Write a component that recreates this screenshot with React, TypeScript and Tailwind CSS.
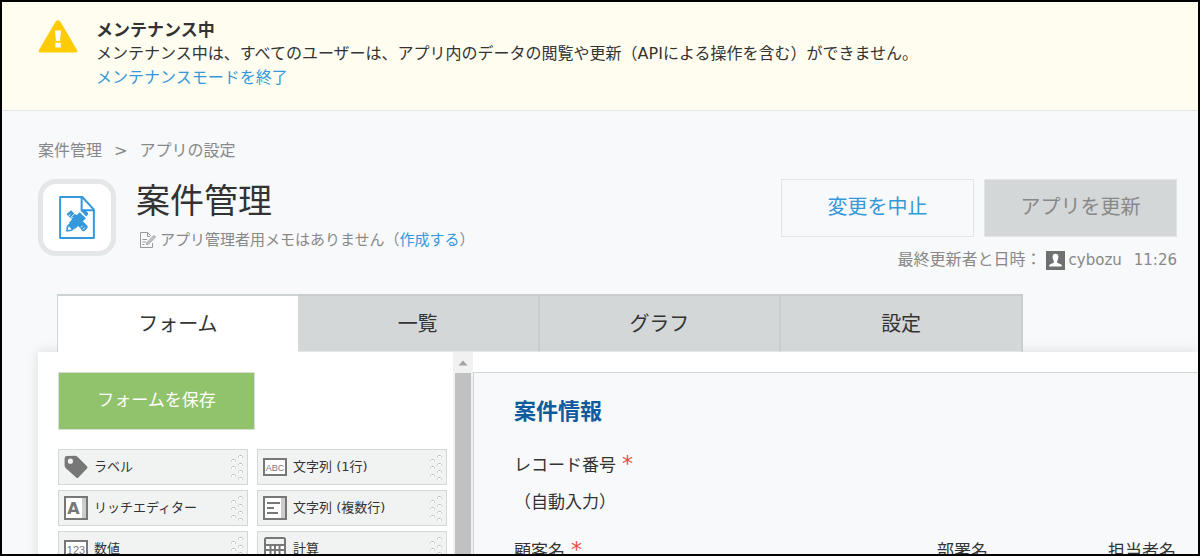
import React from 'react';

type IconName = 'label' | 'rich' | 'number' | 'text' | 'multi' | 'calc';

const fields: { name: string; icon: IconName }[] = [
  { name: 'ラベル', icon: 'label' },
  { name: '文字列 (1行)', icon: 'text' },
  { name: 'リッチエディター', icon: 'rich' },
  { name: '文字列 (複数行)', icon: 'multi' },
  { name: '数値', icon: 'number' },
  { name: '計算', icon: 'calc' },
];

const tabs = ['フォーム', '一覧', 'グラフ', '設定'];

const WarningIcon = () => (
  <svg viewBox="0 0 40 33" className="w-10 h-[33px] shrink-0" aria-hidden="true">
    <path d="M18 1.2Q20 -.8 22 1.2Q23 2.4 39 30Q40 32.4 37.6 32.4H2.4Q0 32.4 1 30Q17 2.4 18 1.2Z" fill="#ffcb05" />
    <path d="M17 10.5H23L22 21H18ZM17.4 22.8H22.8V27.6H17.4Z" fill="#fff" />
  </svg>
);

// Document with a crossed pencil and ruler
const AppIcon = () => (
  <svg viewBox="0 0 108 130" className="w-9 h-[43px]" aria-hidden="true">
    <path d="M3 3H70L105 41V127H3Z" fill="#fff" stroke="#3498db" strokeWidth="6" strokeLinejoin="round" />
    <path d="M68 4V43H104" fill="none" stroke="#3498db" strokeWidth="6" />
    <g fill="#3498db">
      <path d="M21 108L23 91L33 81L49 97L38 106Z" />
      <path d="M30 80L62 49L81 67L49 99Z" />
      <path d="M67 46L74 41Q77 41 80 44L86 50Q88 53 87 56L82 62Z" />
      <path d="M22 55L36 43L46 53L33 66Z" />
      <path d="M34 67L48 54L78 83L64 97Z" />
      <path d="M73 78L86 91Q88 94 84 99L76 106Q72 108 69 104L60 92Z" />
    </g>
    <path d="M26 103L29 91L38 101Z" fill="#fff" />
    <path d="M28 61L34 56M36 69L41 64M66 95L71 90M72 101L78 95" stroke="#fff" strokeWidth="3" />
  </svg>
);

const MemoIcon = () => (
  <svg viewBox="0 0 18 18" className="w-[18px] h-[18px] shrink-0" fill="none" stroke="#999" aria-hidden="true">
    <path d="M13.5 12V16.5H1.5V1.5H8.5L12 5" />
    <path d="M8.5 1.5V5.5H11M3.5 8.5H8M3.5 11H7M3.5 13.5H5.5" />
    <path d="M7.5 13.5L8 11.5L15 4.5L16.5 6L9.5 13Z" fill="#ccc" />
  </svg>
);

const UserIcon = () => (
  <svg viewBox="0 0 20 20" className="w-[19px] h-[19px] shrink-0" aria-hidden="true">
    <path d="M0 0H20V20H0Z" fill="#707070" />
    <path d="M10 3C12.4 3 13.4 4.8 13 7.2C12.8 9 12 9.8 11.8 10.6V12.4L15.6 14Q16.8 14.6 16.8 16.4H3.2Q3.2 14.6 4.4 14L8.2 12.4V10.6C8 9.8 7.2 9 7 7.2C6.6 4.8 7.6 3 10 3Z" fill="#fff" />
  </svg>
);

const iconText = { fill: '#777', textAnchor: 'middle' as const, stroke: 'none' };

const FieldIcon = ({ name }: { name: IconName }) => (
  <svg viewBox="0 0 24 24" className="w-6 h-6 shrink-0" fill="none" stroke="#777" strokeWidth="2" aria-hidden="true">
    {name === 'label' && (
      <path
        fillRule="evenodd"
        d="M3 1L11 .8Q12.4 .8 13.4 1.8L23 11.2Q24 12.4 23 13.4L14.4 22.6Q13.4 23.6 12.2 22.6L1.8 13.2Q.6 12 .6 10.6V3.4Q.6 1 3 1ZM6.4 3.6A2.6 2.6 0 1 0 6.4 8.8A2.6 2.6 0 1 0 6.4 3.6Z"
        fill="#777"
        stroke="none"
      />
    )}
    {name === 'rich' && (
      <>
        <path d="M1 1H23V23H1Z" fill="#fff" />
        <path d="M18 2H22V22H18Z" fill="#ccc" stroke="none" />
        <text x="9.5" y="18" fontSize="16" fontWeight="700" {...iconText}>A</text>
      </>
    )}
    {name === 'text' && (
      <>
        <path d="M1 4H23V20H1Z" fill="#fff" />
        <text x="12" y="16" fontSize="9" className="font-['Liberation_Sans',sans-serif]" {...iconText}>ABC</text>
      </>
    )}
    {name === 'number' && (
      <>
        <path d="M1 4H23V20H1Z" fill="#fff" />
        <text x="12" y="17" fontSize="11" className="font-['Liberation_Sans',sans-serif]" {...iconText}>123</text>
      </>
    )}
    {name === 'multi' && (
      <>
        <path d="M1 1H23V23H1Z" fill="#fff" />
        <path d="M18 2H22V22H18Z" fill="#ccc" stroke="none" />
        <path d="M4 7H17M4 12H11M4 17H15" />
      </>
    )}
    {name === 'calc' && (
      <>
        <rect x="2" y="1" width="20" height="22" rx="1.5" fill="#f1f3f3" />
        <path d="M3 8H21V22H3Z" fill="#fff" stroke="none" />
        <path d="M3 8H21M3 13H21M3 18H21M7.5 8V22M12 8V22M16.5 8V22" />
      </>
    )}
  </svg>
);

const DragHandle = () => (
  <svg viewBox="0 0 13 26" className="w-[13px] h-[26px] shrink-0" fill="#fff" stroke="#bcbebe" aria-hidden="true">
    <path d="M.5 7.5V6.5L1.5 5.5H3.5L4.5 6.5V7.5M.5 14.5V13.5L1.5 12.5H3.5L4.5 13.5V14.5M.5 22.5V21.5L1.5 20.5H3.5L4.5 21.5V22.5" />
    <path d="M7.5 3.5V2.5L8.5 1.5H10.5L11.5 2.5V3.5M7.5 11.5V10.5L8.5 9.5H10.5L11.5 10.5V11.5M7.5 18.5V17.5L8.5 16.5H10.5L11.5 17.5V18.5M7.5 25.5V24.5L8.5 23.5H10.5L11.5 24.5V25.5" />
  </svg>
);

const Required = () => <span className="ml-[6px] text-[22px] text-[#e74c3c]">*</span>;

const Banner = () => (
  <div className="flex items-start gap-[18px] border-b border-[#e3e7e8] bg-[#fffdf0] pl-9 pt-4 pb-5">
    <div className="pt-[2px]">
      <WarningIcon />
    </div>
    <div className="text-[16px] leading-6">
      <p className="text-[17px] font-bold">メンテナンス中</p>
      <p>メンテナンス中は、すべてのユーザーは、アプリ内のデータの閲覧や更新（APIによる操作を含む）ができません。</p>
      <a href="#finish" className="text-[#3498db]">メンテナンスモードを終了</a>
    </div>
  </div>
);

const Header = () => (
  <header className="pl-9 pr-[21px] pt-7">
    <nav className="flex gap-3 text-[16px] leading-6 text-[#888]">
      <a href="#app">案件管理</a>
      <span>&gt;</span>
      <span>アプリの設定</span>
    </nav>

    <div className="mt-4 flex items-start">
      <div className="flex h-[77px] w-[78px] shrink-0 items-center justify-center rounded-[18px] border-[5px] border-[#e3e7e8] bg-white">
        <AppIcon />
      </div>
      <div className="ml-5 flex-1">
        <h1 className="text-[34px] leading-[44px]">案件管理</h1>
        <p className="mt-[5px] flex items-center gap-[3px] pl-[3px] text-[15px] leading-6 text-[#888]">
          <MemoIcon />
          <span>
            アプリ管理者用メモはありません（<a href="#memo" className="text-[#3498db]">作成する</a>）
          </span>
        </p>
      </div>
      <div className="shrink-0">
        <div className="flex gap-[10px] text-[20px]">
          <button type="button" className="h-[58px] w-[193px] border border-[#e0e4e5] pb-[2px] text-[#3498db]">変更を中止</button>
          <button type="button" className="h-[58px] w-[193px] border border-[#e0e4e5] bg-[#d4d7d7] pb-[2px] text-[#888]">アプリを更新</button>
        </div>
        <div className="mt-[11px] flex items-center justify-end text-[15px] leading-6 text-[#888]">
          <span className="mr-1 text-[16px]">最終更新者と日時：</span>
          <UserIcon />
          <span className="ml-1">cybozu</span>
          <span className="ml-3">11:26</span>
        </div>
      </div>
    </div>
  </header>
);

const Tabs = () => (
  <div className="relative z-10 ml-[55px] mt-[22px] flex w-[966px] text-[20px]" role="tablist">
    {tabs.map((tab, i) => (
      <button
        key={tab}
        type="button"
        role="tab"
        aria-selected={i === 0}
        className={
          i === 0
            ? 'h-[58px] flex-1 border-l border-t-2 border-[#ced3d3] bg-white'
            : 'h-[58px] flex-1 border-r-2 border-t-2 border-b border-[#c9cdcd] border-b-[#e3e7e8] bg-[#d4d7d7]'
        }
      >
        {tab}
      </button>
    ))}
  </div>
);

const Palette = () => (
  <aside className="w-[415px] shrink-0 pl-5 pt-5">
    <button type="button" className="h-[58px] w-[197px] border border-[#d8dfdb] bg-[#91c36c] text-[17px] text-white">
      フォームを保存
    </button>
    <ul className="mt-[19px] grid grid-cols-[190px_190px] gap-x-[9px] gap-y-[5px]">
      {fields.map((field) => (
        <li key={field.name} className="flex h-9 items-center border border-[#d4d7d7] bg-[#f1f3f3] pl-[5px] pr-[3px] text-[13px]">
          <FieldIcon name={field.icon} />
          <span className="ml-[6px] flex-1">{field.name}</span>
          <DragHandle />
        </li>
      ))}
    </ul>
  </aside>
);

const Scrollbar = () => (
  <div className="flex w-5 shrink-0 flex-col bg-[#f1f1f1] px-[2px]">
    <svg viewBox="0 0 16 21" className="h-[21px] w-4" aria-hidden="true">
      <path d="M3.5 13.5L8 8.5L12.5 13.5Z" fill="#a3a3a3" />
    </svg>
    <div className="flex-1 bg-[#c1c1c1]" />
  </div>
);

const Canvas = () => (
  <section className="mt-5 min-w-0 flex-1 border-l border-t border-[#d0d4d6] bg-[#f7f9fb] pb-10 pl-10 pt-[23px] text-[17px] leading-6">
    <h2 className="text-[22px] font-bold leading-8 text-[#105a9e]">案件情報</h2>
    <p className="mt-6">レコード番号<Required /></p>
    <p className="mt-[13px]">（自動入力）</p>
    <div className="mt-6 flex items-baseline whitespace-nowrap">
      <p className="w-[423px]">顧客名<Required /></p>
      <p className="w-[171px]">部署名</p>
      <p>担当者名</p>
    </div>
  </section>
);

const App: React.FC = () => {
  return (
    <div className="h-screen overflow-hidden border-2 border-black bg-[#f7f9fb] font-['DejaVu_Sans','Noto_Sans_CJK_JP',sans-serif] text-[#333]">
      <Banner />
      <Header />
      <Tabs />
      <main className="ml-9 flex bg-white shadow-[0_0_12px_rgba(0,0,0,0.12)]">
        <Palette />
        <Scrollbar />
        <Canvas />
      </main>
    </div>
  );
};

export default App;
